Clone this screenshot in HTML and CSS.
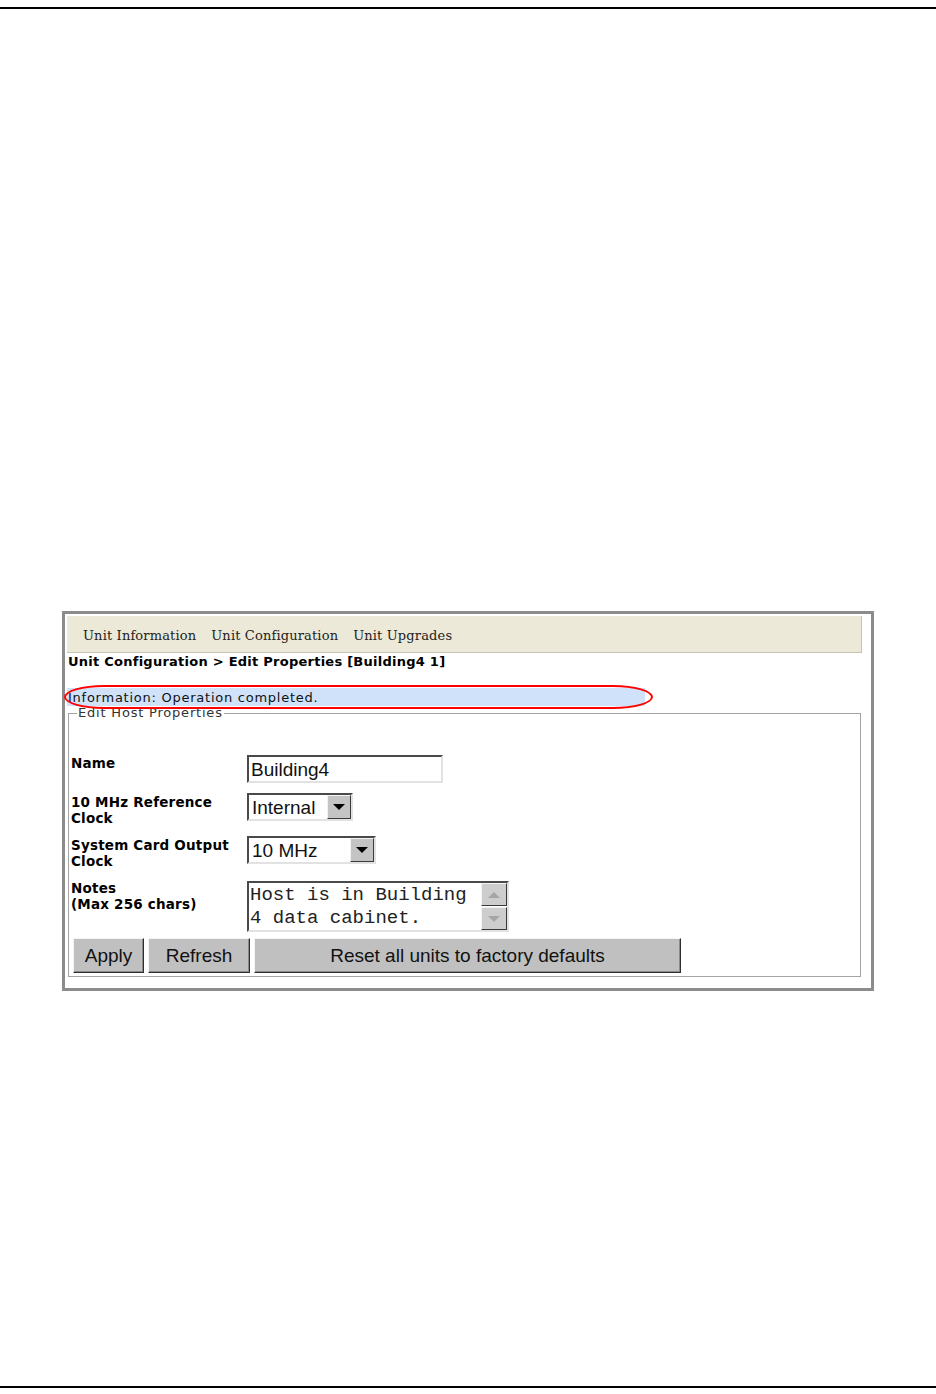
FILE: index.html
```html
<!DOCTYPE html>
<html lang="en">
<head>
    <meta charset="UTF-8">
    <title>Unit Configuration - Edit Properties</title>
    <link rel="stylesheet" href="styles.css">
</head>
<body>
    <div class="rule rule-top"></div>

    <div class="figure">
        <nav class="tabs">
            <span>Unit Information</span>
            <span>Unit Configuration</span>
            <span>Unit Upgrades</span>
        </nav>

        <div class="crumb">Unit Configuration &gt; Edit Properties [Building4 1]</div>

        <div class="info">
            Information: Operation completed.
            <span class="callout"></span>
        </div>

        <fieldset class="host">
            <legend>Edit Host Properties</legend>

            <div class="field">
                <div class="label">Name</div>
                <div class="text-input">Building4</div>
            </div>

            <div class="field">
                <div class="label">10 MHz Reference<br>Clock</div>
                <div class="select select-ref">
                    <span class="select-value">Internal</span>
                    <span class="select-btn"><i class="arrow-down"></i></span>
                </div>
            </div>

            <div class="field">
                <div class="label">System Card Output<br>Clock</div>
                <div class="select select-out">
                    <span class="select-value">10 MHz</span>
                    <span class="select-btn"><i class="arrow-down"></i></span>
                </div>
            </div>

            <div class="field">
                <div class="label">Notes<br>(Max 256 chars)</div>
                <div class="notes">
                    <div class="notes-text">Host is in Building<br>4 data cabinet.</div>
                    <div class="scrollbar">
                        <span class="scroll-btn"><i class="arrow-up dim"></i></span>
                        <span class="scroll-btn"><i class="arrow-down dim"></i></span>
                    </div>
                </div>
            </div>

            <div class="actions">
                <button class="btn btn-apply">Apply</button>
                <button class="btn btn-refresh">Refresh</button>
                <button class="btn btn-reset">Reset all units to factory defaults</button>
            </div>
        </fieldset>
    </div>

    <div class="rule rule-bottom"></div>
</body>
</html>
```

FILE: styles.css
```css
body {
    margin: 0;
    background: #fff;
    color: #000;
    font-family: "DejaVu Sans", Verdana, sans-serif;
}

.rule {
    height: 2px;
    background: #000;
}

.rule-top {
    margin-top: 7px;
}

.rule-bottom {
    margin-top: 395px;
}

/* screenshot frame */
.figure {
    margin: 602px 0 0 62px;
    width: 812px;
    height: 380px;
    box-sizing: border-box;
    border: 3px solid #8c8c8c;
    padding: 2px 9px 0 2px;
}

.tabs {
    height: 37px;
    box-sizing: border-box;
    background: #ece9d8;
    border-right: 1px solid #c6c3b6;
    border-bottom: 1px solid #c6c3b6;
    display: flex;
    align-items: center;
    gap: 15px;
    padding: 3px 0 0 16px;
    font-family: "DejaVu Serif", Georgia, serif;
    font-size: 13px;
    letter-spacing: 0.15px;
    color: #222;
}

.crumb {
    margin: 1px 0 0 1px;
    font-weight: bold;
    font-size: 13px;
    line-height: 16px;
    letter-spacing: 0.25px;
}

.info {
    position: relative;
    z-index: 1;
    margin-top: 18px;
    width: 578px;
    height: 18px;
    padding-left: 1px;
    box-sizing: border-box;
    background: #cfe2fa;
    font-size: 13px;
    line-height: 19px;
    letter-spacing: 0.75px;
    color: #111;
}

.callout {
    position: absolute;
    left: -3px;
    top: -3px;
    width: 589px;
    height: 24px;
    box-sizing: border-box;
    border: 2px solid #f00;
    border-radius: 40px / 12px;
}

.host {
    margin: -1px 0 0 1px;
    width: 793px;
    box-sizing: border-box;
    border: 1px solid #a4a4a4;
    padding: 0 3px 3px 2px;
    min-height: 272px;
}

.host legend {
    margin-left: 6px;
    padding: 0 1px;
    font-size: 13px;
    line-height: 16px;
    letter-spacing: 0.8px;
    color: #333;
}

.field {
    display: flex;
    align-items: flex-start;
    margin-top: 11px;
}

.field:first-of-type {
    margin-top: 34px;
}

.label {
    width: 176px;
    flex-shrink: 0;
    font-weight: bold;
    font-size: 13.5px;
    line-height: 16px;
    letter-spacing: 0.2px;
}

/* sunken controls */
.text-input,
.select,
.notes {
    box-sizing: border-box;
    border: 2px solid;
    border-color: #4a4a4a #e2e2e2 #e2e2e2 #4a4a4a;
    background: #fff;
    font-family: "Liberation Sans", Arial, sans-serif;
    font-size: 19px;
    color: #111;
}

.text-input {
    width: 196px;
    height: 28px;
    padding-left: 2px;
    line-height: 26px;
}

.select {
    display: flex;
    justify-content: space-between;
    height: 28px;
    margin-top: -1px;
}

.select-ref {
    width: 106px;
}

.select-out {
    width: 129px;
}

.select-value {
    padding-left: 3px;
    line-height: 25px;
}

.select-btn,
.scroll-btn {
    box-sizing: border-box;
    display: flex;
    align-items: center;
    justify-content: center;
    background: #c4c4c4;
    border: 1px solid;
    border-color: #f2f2f2 #3a3a3a #3a3a3a #f2f2f2;
}

.select-btn {
    width: 24px;
    height: 24px;
}

.arrow-down,
.arrow-up {
    width: 0;
    height: 0;
    border-left: 6px solid transparent;
    border-right: 6px solid transparent;
}

.arrow-down {
    border-top: 6px solid #000;
}

.arrow-up {
    border-bottom: 6px solid #000;
}

.arrow-down.dim {
    border-top-color: #a6a6a6;
}

.arrow-up.dim {
    border-bottom-color: #a6a6a6;
}

.notes {
    display: flex;
    justify-content: space-between;
    width: 262px;
    height: 51px;
    margin-top: 1px;
}

.notes-text {
    padding: 1px 0 0 1px;
    font-family: "Liberation Mono", "Courier New", monospace;
    font-size: 19px;
    line-height: 23px;
    color: #222;
}

.scrollbar {
    display: flex;
    flex-direction: column;
    gap: 1px;
    width: 26px;
}

.scroll-btn {
    height: 23px;
    background: #cdcdcd;
}

.actions {
    display: flex;
    gap: 4px;
    margin: 6px 0 0 2px;
}

.btn {
    height: 35px;
    box-sizing: border-box;
    padding: 0;
    background: #c0c0c0;
    border: 1px solid;
    border-color: #f4f4f4 #2e2e2e #2e2e2e #f4f4f4;
    box-shadow: inset -1px -1px #8a8a8a;
    font-family: "Liberation Sans", Arial, sans-serif;
    font-size: 19px;
    color: #111;
}

.btn-apply {
    width: 71px;
}

.btn-refresh {
    width: 102px;
}

.btn-reset {
    width: 427px;
}
```
